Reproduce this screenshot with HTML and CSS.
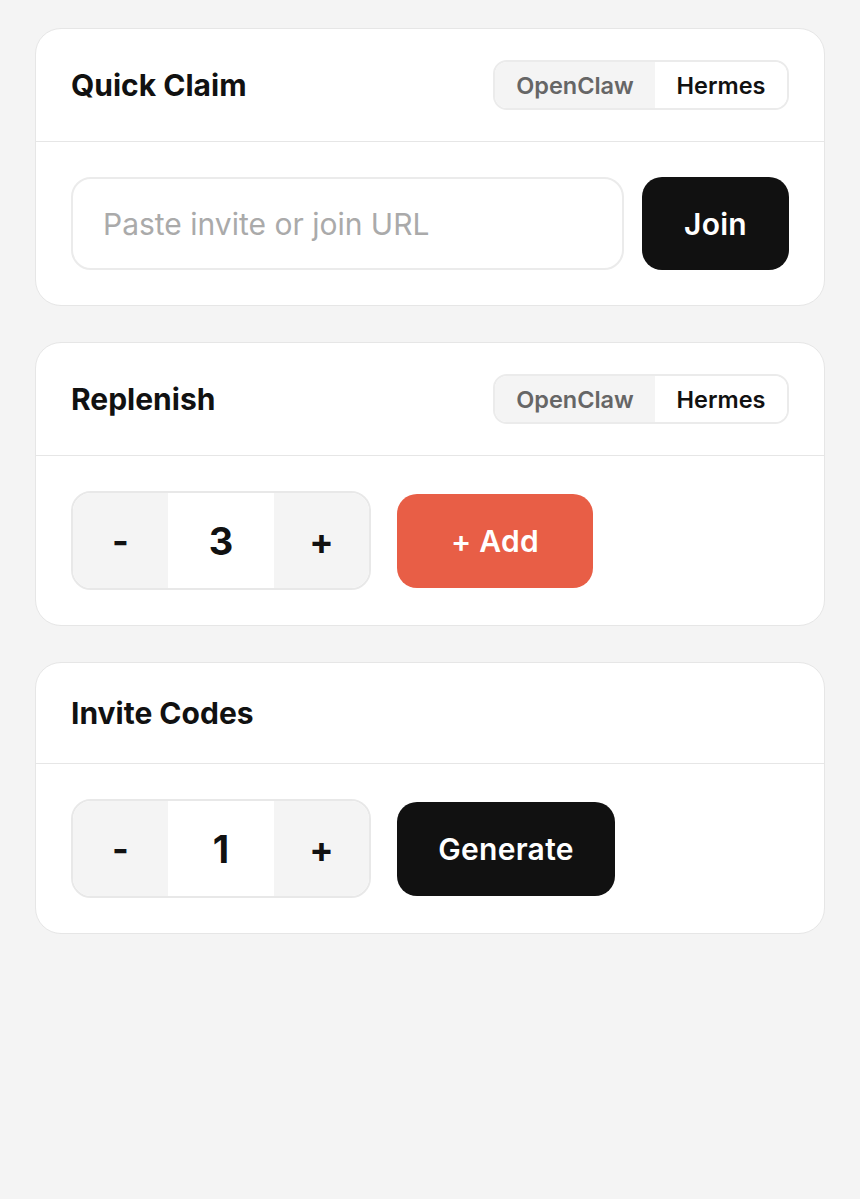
FILE: index.html
```html
<!DOCTYPE html>
<html>
<head>
<meta charset="utf-8">
<link rel="stylesheet" href="styles.css">
</head>
<body>
<div class="page">
  <section class="card">
    <div class="card-head">
      <h2 class="title">Quick Claim</h2>
      <div class="toggle">
        <span class="seg seg-off">OpenClaw</span>
        <span class="seg seg-on">Hermes</span>
      </div>
    </div>
    <div class="card-body">
      <div class="input">Paste invite or join URL</div>
      <button class="btn btn-dark btn-join">Join</button>
    </div>
  </section>

  <section class="card">
    <div class="card-head">
      <h2 class="title">Replenish</h2>
      <div class="toggle">
        <span class="seg seg-off">OpenClaw</span>
        <span class="seg seg-on">Hermes</span>
      </div>
    </div>
    <div class="card-body">
      <div class="stepper">
        <span class="step-btn">-</span>
        <span class="step-val">3</span>
        <span class="step-btn">+</span>
      </div>
      <button class="btn btn-red btn-add">+ Add</button>
    </div>
  </section>

  <section class="card">
    <div class="card-head">
      <h2 class="title">Invite Codes</h2>
    </div>
    <div class="card-body">
      <div class="stepper">
        <span class="step-btn">-</span>
        <span class="step-val">1</span>
        <span class="step-btn">+</span>
      </div>
      <button class="btn btn-dark btn-gen">Generate</button>
    </div>
  </section>
</div>
</body>
</html>
```
FILE: styles.css
```css
* { box-sizing: border-box; }
html, body { margin: 0; padding: 0; }
body {
  background: #f4f4f4;
  font-family: Inter, "Noto Sans", sans-serif;
  color: #111;
}
.page {
  padding: 28px 35px;
  display: flex;
  flex-direction: column;
  gap: 36px;
}
.card {
  background: #fff;
  border: 1px solid #e6e6e6;
  border-radius: 26px;
}
.card-head {
  display: flex;
  align-items: center;
  justify-content: space-between;
  padding: 31px 35px;
  border-bottom: 1px solid #e6e6e6;
}
.title {
  margin: 0;
  font-size: 30px;
  font-weight: 700;
  line-height: 38px;
  letter-spacing: 0;
}
.toggle {
  display: flex;
  height: 50px;
  border: 2px solid #ebebeb;
  border-radius: 14px;
  overflow: hidden;
}
.seg {
  display: flex;
  align-items: center;
  justify-content: center;
  font-size: 23.5px;
  font-weight: 600;
}
.seg-off {
  width: 160px;
  background: #f4f4f4;
  color: #666;
}
.seg-on {
  width: 132px;
  background: #fff;
  color: #111;
}
.card-body {
  display: flex;
  align-items: center;
  gap: 18px;
  padding: 35px;
}
.input {
  flex: 1;
  height: 93px;
  border: 2px solid #ebebeb;
  border-radius: 20px;
  display: flex;
  align-items: center;
  padding: 0 30px;
  font-size: 30px;
  color: #aaa;
}
.btn {
  border: 0;
  font-family: inherit;
  font-size: 30px;
  font-weight: 600;
  letter-spacing: 0.3px;
  color: #fff;
  border-radius: 20px;
  height: 94px;
  display: flex;
  align-items: center;
  justify-content: center;
}
.btn-dark { background: #111; }
.btn-red { background: #e85e46; }
.btn-join { width: 147px; height: 93px; }
.btn-add { width: 196px; margin-left: 8px; }
.btn-gen { width: 218px; margin-left: 8px; }
.stepper {
  display: flex;
  height: 99px;
  width: 300px;
  border: 2px solid #e8e8e8;
  border-radius: 20px;
  overflow: hidden;
}
.step-btn {
  width: 95px;
  background: #f4f4f4;
  display: flex;
  align-items: center;
  justify-content: center;
  font-size: 36px;
  font-weight: 700;
}
.step-val {
  flex: 1;
  background: #fff;
  display: flex;
  align-items: center;
  justify-content: center;
  font-size: 38px;
  font-weight: 700;
}
```
